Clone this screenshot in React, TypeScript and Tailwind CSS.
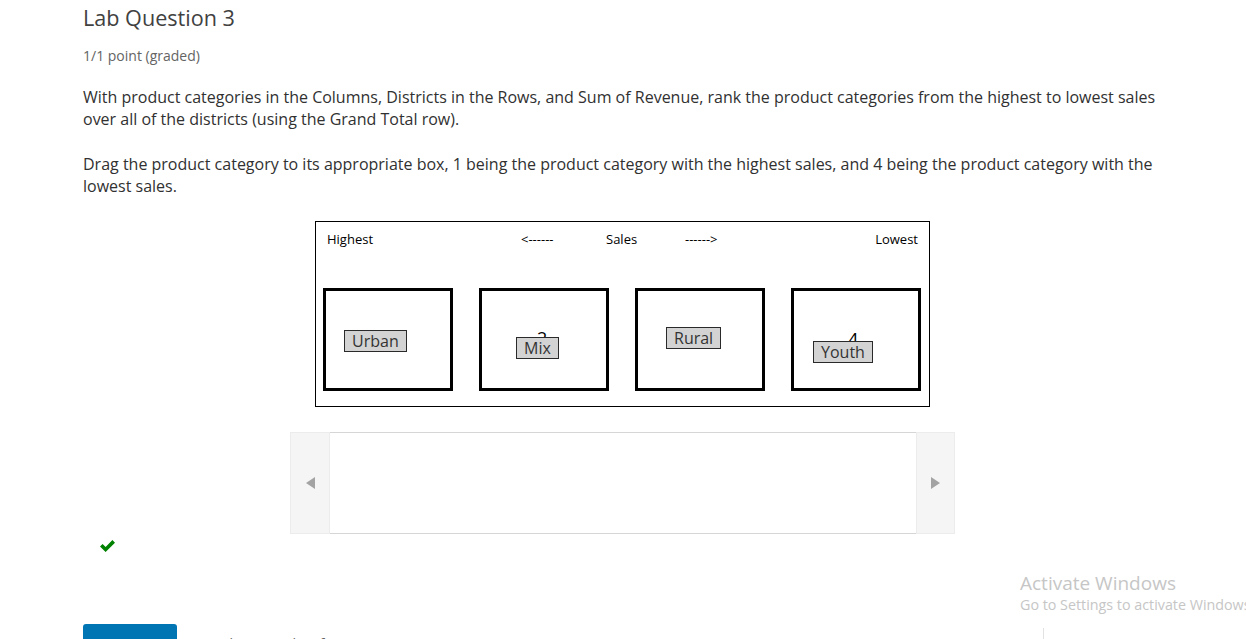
import React from 'react';

const Label = ({ text, className }: { text: string; className: string }) => (
  <div
    className={`absolute bg-[#d3d3d3] border border-[#2a2a2a] text-[#333] text-[16px] leading-[20px] px-[7px] ${className}`}
  >
    {text}
  </div>
);

const DropBox = ({ children }: { children?: React.ReactNode }) => (
  <div className="relative w-[130px] h-[103px] border-[3px] border-black">{children}</div>
);

const RankingPicture = () => (
  <div className="ml-[232px] w-[615px] h-[186px] border border-black font-['Open_Sans',sans-serif] text-black">
    <div className="flex pt-[9px] pl-[11px] text-[13px] leading-[16px]">
      <span className="w-[194px]">Highest</span>
      <span className="w-[85px]">&lt;------</span>
      <span className="w-[79px]">Sales</span>
      <span className="w-[100px]">------&gt;</span>
      <span className="ml-auto pr-[11px]">Lowest</span>
    </div>
    <div className="flex gap-[26px] pl-[7px] mt-[41px]">
      <DropBox>
        <Label text="Urban" className="left-[18px] top-[39px]" />
      </DropBox>
      <DropBox>
        <span className="absolute left-[55px] top-[37px] text-[18px] leading-[20px]">2</span>
        <Label text="Mix" className="left-[34px] top-[46px]" />
      </DropBox>
      <DropBox>
        <Label text="Rural" className="left-[28px] top-[36px]" />
      </DropBox>
      <DropBox>
        <span className="absolute left-[54px] top-[38px] text-[18px] leading-[20px]">4</span>
        <Label text="Youth" className="left-[19px] top-[50px]" />
      </DropBox>
    </div>
  </div>
);

const Carousel = () => (
  <div className="ml-[207px] mt-[25px] flex w-[665px] h-[102px]">
    <div className="w-[40px] bg-[#f5f5f5] border border-[#ececec] flex items-center justify-center">
      <svg width="9" height="12" viewBox="0 0 9 12">
        <path d="M9 0 L0 6 L9 12 Z" fill="#a3a3a3" />
      </svg>
    </div>
    <div className="flex-1 bg-white border-y border-[#d6d6d6]" />
    <div className="w-[39px] bg-[#f5f5f5] border border-[#ececec] flex items-center justify-center">
      <svg width="9" height="12" viewBox="0 0 9 12">
        <path d="M0 0 L9 6 L0 12 Z" fill="#a3a3a3" />
      </svg>
    </div>
  </div>
);

export default function App() {
  return (
    <div className="relative h-[639px] overflow-hidden bg-white font-['Open_Sans',sans-serif]">
      <div className="pl-[83px]">
        <h2 className="pt-[4px] text-[21.6px] leading-[28px] text-[#414141]">Lab Question 3</h2>
        <div className="mt-[14px] text-[14px] leading-[20px] text-[#646464]">1/1 point (graded)</div>
        <div className="mt-[20px] w-[1090px] text-[16px] leading-[22px] text-[#313131]">
          <p>
            With product categories in the Columns, Districts in the Rows, and Sum of Revenue, rank the product
            categories from the highest to lowest sales over all of the districts (using the Grand Total row).
          </p>
          <p className="mt-[23px]">
            Drag the product category to its appropriate box, 1 being the product category with the highest sales,
            and 4 being the product category with the lowest sales.
          </p>
        </div>
        <div className="mt-[24px]">
          <RankingPicture />
        </div>
        <Carousel />
        <div className="mt-[5px] pl-[16px]">
          <svg width="17" height="14" viewBox="0 0 17 14">
            <path d="M1 7.5 L3.6 4.9 L6.6 7.9 L13.4 1.1 L16 3.7 L6.6 13.1 Z" fill="#008100" />
          </svg>
        </div>
        <div className="mt-[71px] flex items-start">
          <button className="w-[94px] h-[36px] rounded-[3px] bg-[#0075b4] text-white text-[14px] pt-[12px]">
            Submit
          </button>
          <span className="ml-[24px] mt-[10px] text-[14px] leading-[20px] text-[#646464]">
            You have used 1 of 2 attempts
          </span>
        </div>
      </div>

      <div className="absolute left-[1020px] top-[571px] whitespace-nowrap text-[#c6c6c6]">
        <div className="text-[19px] leading-[25px]">Activate Windows</div>
        <div className="text-[14.3px] leading-[18px]">Go to Settings to activate Windows.</div>
      </div>
      <div className="absolute left-[1043px] top-[628px] w-px h-[11px] bg-[#e2e2e2]" />
    </div>
  );
}
